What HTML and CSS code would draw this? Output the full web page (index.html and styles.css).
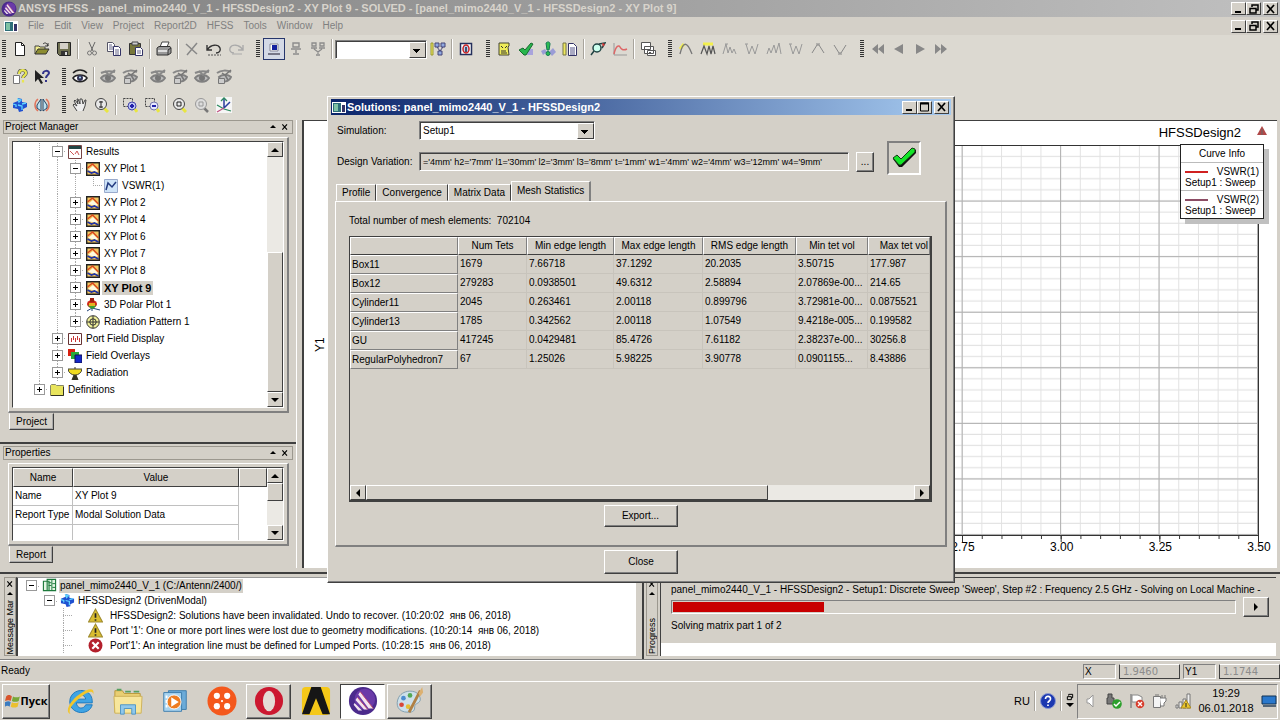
FILE: index.html
```html
<!DOCTYPE html>
<html lang="en">
<head>
    <meta charset="utf-8">
    <title>ANSYS HFSS</title>
    <link rel="stylesheet" href="styles.css">
</head>
<body>
    <svg class="sprite" aria-hidden="true">
        <symbol id="logo" viewBox="0 0 32 32"><circle cx="16" cy="16" r="15" fill="#4b2a8c"/><circle cx="18" cy="14" r="11" fill="#6a3aa8"/><path d="M13 6l14 18h-5L11 9zM10 12l11 13h-4L8 15zM7 18l8 8h-4l-5-6z" fill="#f3e4ee"/><path d="M13 6l14 18M10 12l11 13" stroke="#c24a6a" fill="none"/></symbol>
        <symbol id="app" viewBox="0 0 14 11"><path d="M0 0h14v11H0z" fill="#fff"/><path d="M1 1h8v9H1z" fill="#2d6e78"/><path d="M2 2h4v7H2z" fill="#7fc2a4"/><path d="M10 3h3v7h-3z" fill="#336"/></symbol>
        <symbol id="new" viewBox="0 0 16 16"><path d="M3.500 1.500h6l3 3v10h-9z" fill="#fff" stroke="#222"/><path d="M9.500 1.500v3h3" fill="none" stroke="#222"/></symbol>
        <symbol id="open" viewBox="0 0 16 16"><path d="M1 13V5h4l1 1h5v2" fill="#f2ee8c" stroke="#444"/><path d="M1 13l3-5h11l-3 5z" fill="#8c8c30" stroke="#333"/><path d="M9 3c2-2 4-1 5 2m0-3v3h-3" fill="none" stroke="#333"/></symbol>
        <symbol id="save" viewBox="0 0 16 16"><path d="M1.500 1.500h13v13h-11l-2-2z" fill="#6f7050" stroke="#222"/><path d="M4 2h8v6H4z" fill="#d4d0c8"/><path d="M5 10h7v4H5z" fill="#333"/><path d="M9 11h2v3H9z" fill="#ddd"/></symbol>
        <symbol id="cut" viewBox="0 0 16 16"><path d="M5 1l4 9M11 1L7 10" stroke="#666" fill="none"/><circle cx="5.500" cy="12" r="2" fill="none" stroke="#777"/><circle cx="10.500" cy="12" r="2" fill="none" stroke="#777"/></symbol>
        <symbol id="copy" viewBox="0 0 16 16"><path d="M1.500 1.500h5l2 2v7h-7z" fill="#fff" stroke="#556"/><path d="M7.500 5.500h5l2 2v7h-7z" fill="#fff" stroke="#336"/><path d="M3 4h3M3 6h4M3 8h4M9 9h4M9 11h4M9 13h4" stroke="#668"/></symbol>
        <symbol id="paste" viewBox="0 0 16 16"><path d="M1.500 2.500h11v11h-11z" fill="#77773a" stroke="#333"/><path d="M4 1h6v3H4z" fill="#ccc" stroke="#444"/><path d="M7.500 6.500h5l2 2v6h-7z" fill="#fff" stroke="#336"/><path d="M9 10h4M9 12h4" stroke="#668"/></symbol>
        <symbol id="print" viewBox="0 0 16 16"><path d="M4 6l2-5h7l-2 5" fill="#fff" stroke="#444"/><path d="M1 7l2-1.500h11l1 1.500v5l-3 2H1z" fill="#999" stroke="#333"/><path d="M2 9h10v2H2z" fill="#ddd"/><path d="M12 14V9l3-2" stroke="#333" fill="none"/></symbol>
        <symbol id="del" viewBox="0 0 16 16"><path d="M2 3l11 10M13 2L3 14" stroke="#888" stroke-width="1.500" fill="none"/></symbol>
        <symbol id="undo" viewBox="0 0 16 16"><path d="M1 4v5h5M1.500 8.500C5 3 12 3 14 7c1 3-1 5-4 5" fill="none" stroke="#333" stroke-width="1.400"/><path d="M2 14h13" stroke="#555" stroke-dasharray="2 1"/></symbol>
        <symbol id="redo" viewBox="0 0 16 16"><path d="M15 4v5h-5M14.500 8.500C11 3 4 3 2 7c-1 3 1 5 4 5" fill="none" stroke="#aaa" stroke-width="1.400"/><path d="M4 13h10" stroke="#aaa"/></symbol>
        <symbol id="local" viewBox="0 0 16 16"><path d="M4 3h8v7H4z" fill="#fff" stroke="#889"/><path d="M6 4h5v5H6z" fill="#1420a0"/><path d="M2 12h12v2H2z" fill="#778"/></symbol>
        <symbol id="remote" viewBox="0 0 16 16"><path d="M5 2h6v4H5zM3 8h10M8 9v3M5 13h6" fill="none" stroke="#8c8c8c" stroke-width="1.400"/></symbol>
        <symbol id="dist" viewBox="0 0 16 16"><path d="M2 2h4v3H2zM10 2h4v3h-4zM1 7h6M9 7h6M4 8l4 3 4-3M8 11v2M6 14h4" fill="none" stroke="#8c8c8c" stroke-width="1.300"/></symbol>
        <symbol id="tree" viewBox="0 0 16 16"><path d="M1 2h2v12H1z" fill="#eee860" stroke="#993"/><path d="M5 2h4v4H5zM11 2h4v4h-4zM8 10h4v4H8z" fill="#8fa8e0" stroke="#447"/><path d="M7 6l3 4 3-4" stroke="#447" fill="none"/></symbol>
        <symbol id="queue" viewBox="0 0 16 16"><path d="M2.500 2.500h11v11h-11z" fill="#fff" stroke="#25305c" stroke-width="1.500"/><ellipse cx="8" cy="8" rx="3" ry="4" fill="#b9d5f0" stroke="#c22" stroke-width="1.500"/><path d="M8 6v5" stroke="#224" stroke-width="1.500"/></symbol>
        <symbol id="note" viewBox="0 0 16 16"><path d="M3 2h10v3l-1 1 1 8H3z" fill="#eeec58" stroke="#443"/><path d="M5 5l2 2M11 5L9 7M5 10h5M5 12h6" stroke="#333" fill="none"/></symbol>
        <symbol id="valid" viewBox="0 0 16 16"><path d="M10 8h5v6h-6z" fill="#a9a4dc"/><path d="M1 9l4-2 2 2 6-7 2 1-7 11H6z" fill="#28b64c" stroke="#186a30"/></symbol>
        <symbol id="analyze" viewBox="0 0 16 16"><path d="M1 10l4-2 2 3-4 3zM9 11l4-4 3 4-4 4z" fill="#9a9cd6"/><path d="M6 2c2-2 4-1 4 1L9 9H7z" fill="#2cbc50" stroke="#175"/><circle cx="8" cy="12.500" r="2" fill="#2cbc50" stroke="#175"/></symbol>
        <symbol id="report" viewBox="0 0 16 16"><path d="M1 2h3v12H1z" fill="#eee860" stroke="#774"/><path d="M6.500 2.500h5l3 3v9h-8z" fill="#fff" stroke="#336"/><path d="M8 7h5M8 9h5M8 11h5M8 13h5" stroke="#558"/></symbol>
        <symbol id="mag" viewBox="0 0 16 16"><circle cx="7" cy="7" r="4" fill="#cfe" stroke="#244" stroke-width="1.500"/><path d="M4 10l-3 4M9 3l6-1-3 5" stroke="#244" stroke-width="1.500" fill="none"/><path d="M12 2l3 1-2 3z" fill="#d33"/></symbol>
        <symbol id="curve" viewBox="0 0 16 16"><path d="M2 2v12h13" stroke="#999" fill="none"/><path d="M2 13C4 4 7 4 8 6s3 4 7 2" stroke="#d66" stroke-width="1.500" fill="none"/></symbol>
        <symbol id="windows" viewBox="0 0 16 16"><path d="M1.500 1.500h9v7h-9zM4.500 5.500h9v7h-9zM7.500 9.500h8v5h-8z" fill="#fff" stroke="#555"/><path d="M8 13l2-2 2 2 2-2" stroke="#555" fill="none"/></symbol>
        <symbol id="w1" viewBox="0 0 16 16"><path d="M2 8l4-5" stroke="#f0ee50" stroke-width="3"/><path d="M2 13C5 0 9 0 14 13" stroke="#777" fill="none" stroke-width="1.300"/></symbol>
        <symbol id="w2" viewBox="0 0 16 16"><path d="M3 3h10" stroke="#f3f04c" stroke-width="3"/><path d="M1 13l3-8 3 8 2-8 2 8 2-8 2 8" stroke="#555" fill="none" stroke-width="1.200"/></symbol>
        <symbol id="w3" viewBox="0 0 16 16"><path d="M1 13L4 3l2 9 2-6 2 6 2-4 2 5M3 3h3" stroke="#999" fill="none"/></symbol>
        <symbol id="w4" viewBox="0 0 16 16"><path d="M2 3l3 10 3-8 3 8 3-10M1 3h3" stroke="#999" fill="none"/></symbol>
        <symbol id="w5" viewBox="0 0 16 16"><path d="M1 13l2-6 2 5 3-8 2 8 3-10 2 11" stroke="#999" fill="none"/></symbol>
        <symbol id="w6" viewBox="0 0 16 16"><path d="M2 12l5-8h2l5 8M6 3h4" stroke="#888" fill="none"/></symbol>
        <symbol id="w7" viewBox="0 0 16 16"><path d="M2 4l5 8h2l5-8M6 13h4" stroke="#888" fill="none"/></symbol>
        <symbol id="first" viewBox="0 0 16 16"><path d="M8 3v10L2 8zM14 3v10L8 8z" fill="#888"/></symbol>
        <symbol id="prev" viewBox="0 0 16 16"><path d="M12 3v10L3 8z" fill="#888"/></symbol>
        <symbol id="next" viewBox="0 0 16 16"><path d="M4 3v10l9-5z" fill="#888"/></symbol>
        <symbol id="last" viewBox="0 0 16 16"><path d="M2 3v10l6-5zM8 3v10l6-5z" fill="#888"/></symbol>
        <symbol id="helpdoc" viewBox="0 0 16 16"><path d="M1.500 6.500h6v8h-6z" fill="#fff" stroke="#777"/><path d="M7 5c0-5 7-5 7-1 0 3-3 2-3 5" fill="none" stroke="#555" stroke-width="3.500"/><path d="M7 5c0-5 7-5 7-1 0 3-3 2-3 5M11 11v2.500" fill="none" stroke="#e8e650" stroke-width="2.200"/></symbol>
        <symbol id="whats" viewBox="0 0 16 16"><path d="M1 1v12l3-3 3 5 2-1-3-5h4z" fill="#222"/><path d="M9 5c0-4 6-4 6-1 0 2-3 2-3 5M12 11v2" fill="none" stroke="#33338a" stroke-width="2"/></symbol>
        <symbol id="eye" viewBox="0 0 16 16"><path d="M1 4c4-4 10-4 14 0" fill="none" stroke="#222" stroke-width="1.500"/><path d="M1 9c3-4 11-4 14 0-3 5-11 5-14 0z" fill="#fff" stroke="#222" stroke-width="1.500"/><circle cx="8" cy="9" r="3" fill="#335"/><circle cx="8" cy="8.500" r="1" fill="#adf"/></symbol>
        <symbol id="eyeoff" viewBox="0 0 16 16"><path d="M1 4c4-2 10-2 14-1" fill="none" stroke="#888" stroke-width="2"/><path d="M1 9c3-4 11-4 14 0-3 5-11 5-14 0z" fill="#bbb" stroke="#808080" stroke-width="2"/><circle cx="8" cy="9" r="3" fill="#777"/><path d="M5 2l4 4 6-5" stroke="#888" stroke-width="2" fill="none"/></symbol>
        <symbol id="eyebox" viewBox="0 0 16 16"><path d="M1 4c4-3 10-3 14-1" fill="none" stroke="#888" stroke-width="2"/><path d="M3 8c3-3 9-3 12 0-2 5-8 6-11 2z" fill="#bbb" stroke="#808080" stroke-width="2"/><path d="M2.500 9.500h6v5h-6z" fill="#ccc" stroke="#777"/><path d="M9 6l3 5M6 4l3 2 6-5" stroke="#777" stroke-width="1.500" fill="none"/></symbol>
        <symbol id="hfss" viewBox="0 0 16 16"><path d="M6 1l4 1v3l5 1v4l-4 2v2l-4 1-1-3-5-1V6l5-2z" fill="#1f50d0"/><path d="M6 2l3 1-2 2zM10 7l4-1M1 7l3 1v2M6 8l4 1v4" stroke="#5fd4ff" stroke-width="1.300" fill="none"/></symbol>
        <symbol id="mirror" viewBox="0 0 16 16"><path d="M4 2C0 5 0 11 4 14M12 2c4 3 4 9 0 12" stroke="#e0745c" stroke-width="1.500" fill="none"/><path d="M7 2v12L3 11V8zM9 2v12l4-3V8z" fill="#bfe0ee" stroke="#246"/></symbol>
        <symbol id="hand" viewBox="0 0 16 16"><path d="M5 14L1 8l1-1 3 2-3-5 1-1 3 4-1-5h1l2 5V2h2l1 5 2-4h1l-1 6-2 5" fill="#eee" stroke="#444"/></symbol>
        <symbol id="zoomv" viewBox="0 0 16 16"><path d="M10 11l4 4" stroke="#e8e640" stroke-width="3"/><circle cx="7" cy="7" r="5.500" fill="#e8e8e8" stroke="#444"/><path d="M7 4v7M5 5h4M5 10h4" stroke="#222" fill="none"/></symbol>
        <symbol id="zoomin" viewBox="0 0 16 16"><path d="M1.500 1.500h9v8h-9z" fill="none" stroke="#444" stroke-dasharray="2 1"/><circle cx="10" cy="9" r="4" fill="#bcc6f4" stroke="#44a"/><path d="M8 9h4M10 7v4" stroke="#22a" stroke-width="2"/><path d="M13 12l2 3" stroke="#e8e640" stroke-width="3"/></symbol>
        <symbol id="zoomout" viewBox="0 0 16 16"><path d="M1.500 1.500h9v8h-9z" fill="none" stroke="#444" stroke-dasharray="2 1"/><circle cx="10" cy="9" r="4" fill="#e6e8fc" stroke="#77a"/><path d="M8 9h4" stroke="#22a" stroke-width="2"/><path d="M13 12l2 3" stroke="#e8e640" stroke-width="3"/></symbol>
        <symbol id="fit" viewBox="0 0 16 16"><path d="M10 11l4 4" stroke="#e8e640" stroke-width="3"/><circle cx="7" cy="7" r="5.500" fill="#e8e8e8" stroke="#444"/><path d="M5 5h4v4H5z" fill="none" stroke="#222"/></symbol>
        <symbol id="fitoff" viewBox="0 0 16 16"><path d="M10 11l4 4" stroke="#777" stroke-width="2.500"/><circle cx="7" cy="7" r="5.500" fill="#ddd" stroke="#999"/><path d="M5 5h4v4H5z" fill="none" stroke="#999"/></symbol>
        <symbol id="axes" viewBox="0 0 16 16"><path d="M0 0h16v16H0z" fill="#f6f6f6"/><path d="M8 2v9M8 11l6-6" stroke="#2a3f9c" stroke-width="1.500" fill="none"/><path d="M5 4l3-3 3 3M1 8l7 4 7 2" stroke="#2a8a5c" fill="none" stroke-width="1.300"/><path d="M8 11l-7 4" stroke="#c05080" stroke-width="1.300"/></symbol>
        <symbol id="results" viewBox="0 0 14 14"><path d="M.5.500h13v13H.5z" fill="#fff" stroke="#744"/><path d="M1 1h12v3H1z" fill="#244"/><path d="M2 6l4 4M7 9l2-3 2 4" stroke="#c55" fill="none"/></symbol>
        <symbol id="xy" viewBox="0 0 14 14"><path d="M.7.700h12.600v12.600H.7z" fill="#f4c860" stroke="#222" stroke-width="1.400"/><path d="M2 8l5-4 5 5-2 1-4-1z" fill="#fffbe0"/><path d="M1.500 6l5-4 6 6" stroke="#d84820" stroke-width="1.400" fill="none"/><path d="M1.500 9l4 2 3-1 4 2" stroke="#2233a0" stroke-width="1.700" fill="none"/></symbol>
        <symbol id="trace" viewBox="0 0 14 14"><path d="M.5.500h13v13H.5z" fill="#cfe4f8" stroke="#9ac"/><path d="M2 11l2-7 4 4 4-5" stroke="#223a80" stroke-width="1.500" fill="none"/></symbol>
        <symbol id="polar" viewBox="0 0 14 14"><path d="M6 8v5M1 13l5-3 8 2" stroke="#247" fill="none"/><ellipse cx="6" cy="6" rx="5" ry="4" fill="#d02818"/><path d="M2 7c3 5 6 5 8 0z" fill="#38a030"/><path d="M3 5h6v3H3z" fill="#e8b020"/><path d="M4 0h4v4H4z" fill="#a02010"/></symbol>
        <symbol id="pattern" viewBox="0 0 14 14"><circle cx="7" cy="7" r="6.300" fill="#f0f09a" stroke="#333"/><circle cx="7" cy="7" r="3.200" fill="none" stroke="#333"/><path d="M7 1v12M1 7h12" stroke="#333" fill="none"/></symbol>
        <symbol id="port" viewBox="0 0 14 14"><path d="M.5 1.500h13v11H.5z" fill="#fff" stroke="#633"/><path d="M3.500 10V6M5.500 8V4M7.500 10V6M9.500 8V4M11.500 10V6" stroke="#c33" fill="none"/></symbol>
        <symbol id="overlay" viewBox="0 0 14 14"><path d="M0 0h7v7H0z" fill="#d82010"/><path d="M3 3h8v7H3z" fill="#28a838"/><path d="M7 6h7v8H7z" fill="#1428c8" stroke="#115"/></symbol>
        <symbol id="antenna" viewBox="0 0 14 14"><path d="M7 4V1M4 14l2-5h2l2 5z" fill="#332" stroke="#332"/><path d="M0 3c1 8 13 8 14 0z" fill="#f0dc20" stroke="#443"/></symbol>
        <symbol id="folder" viewBox="0 0 14 14"><path d="M.5 12.500v-10l1-1h4l1 1h7v10z" fill="#e8e45c" stroke="#886"/><path d="M1 12.500h12.500V4" fill="none" stroke="#332"/></symbol>
        <symbol id="project" viewBox="0 0 16 16"><path d="M1.500 3.500h6v10h-6zM5.500 1.500h9v12h-9z" fill="#e4f6e4" stroke="#1d7a3c" stroke-width="1.200"/><path d="M7 5h3M11 6h3M7 8h3M11 10h3M10.500 2v11" stroke="#1d7a3c" fill="none"/></symbol>
        <symbol id="warn" viewBox="0 0 14 14"><path d="M7 1l6.500 12H.5z" fill="#d9bd30" stroke="#a08c30"/><path d="M7 5v4M7 10.500V12" stroke="#222" stroke-width="1.600"/></symbol>
        <symbol id="error" viewBox="0 0 14 14"><circle cx="7" cy="7" r="6.500" fill="#b3202c"/><path d="M4 4l6 6M10 4l-6 6" stroke="#fff" stroke-width="2"/></symbol>
        <symbol id="check" viewBox="0 0 26 22"><path d="M2 12l4-3 4 4L21 2l4 1v3L11 20H8z" fill="#111"/><path d="M2 11l4-3 4 4L21 1l3 1v3L10 18H8z" fill="#14e428" stroke="#143c14"/></symbol>
        <symbol id="flag" viewBox="0 0 14 14"><path d="M1 3c2-2 4-1 5 0L5 7C4 6 2 6 0 7z" fill="#d8542c"/><path d="M7 3c2 1 4 1 6 0l-1 4c-2 1-4 1-6 0z" fill="#78a838"/><path d="M0 8c2-1 4-1 5 0l-1 4c-1-1-3-1-4 0z" fill="#3c7cc0"/><path d="M6 8c2 1 4 1 6 0l-1 4c-2 1-4 1-6 0z" fill="#ecc030"/></symbol>
        <symbol id="ie" viewBox="0 0 32 32"><path d="M28 20C25 32 5 31 4 17 4 1 29 0 28 18H11c1 7 8 7 10 2zM11 14h10c-1-6-9-6-10 0z" fill="#3fa4e4" stroke="#1c78be" fill-rule="evenodd"/><path d="M5 30c-7-2-1-14 9-21C24 2 31 1 29 9c0-4-4-4-11 1C8 17 1 26 5 30z" fill="#f2c62c"/></symbol>
        <symbol id="files" viewBox="0 0 32 32"><path d="M2 5h8l2 3h17v20H2z" fill="#e9cf73" stroke="#b99838"/><path d="M4 4h5M13 6h6M22 6h6" stroke="#58a060" stroke-width="2"/><path d="M1 11h30l-1 18H2z" fill="#f7e69c" stroke="#cdb058"/><path d="M8 30V20h16v10h-4v-6h-8v6z" fill="#8fc8ec" stroke="#4e94c4"/></symbol>
        <symbol id="media" viewBox="0 0 32 32"><path d="M9 5h19v20H9z" fill="#6cabd8" stroke="#3c7cac"/><path d="M4 7h19v20H4z" fill="#a8d4f0" stroke="#3c7cac"/><path d="M6 10h2v3H6zM6 15h2v3H6zM6 20h2v3H6z" fill="#fff"/><circle cx="15" cy="17" r="7.500" fill="#ee7c20" stroke="#fff"/><path d="M12 12l8 5-8 5z" fill="#fff"/></symbol>
        <symbol id="reel" viewBox="0 0 32 32"><circle cx="16" cy="16" r="15.500" fill="#f4581c"/><g fill="#fff"><circle cx="10.500" cy="10.500" r="3.300"/><circle cx="21.500" cy="10.500" r="3.300"/><circle cx="10.500" cy="21.500" r="3.300"/><circle cx="21.500" cy="21.500" r="3.300"/><circle cx="16" cy="16" r="1.200"/></g></symbol>
        <symbol id="opera" viewBox="0 0 32 32"><ellipse cx="16" cy="16" rx="15" ry="15" fill="#cc1830"/><ellipse cx="16" cy="16" rx="6.500" ry="11" fill="#e4dcd6"/></symbol>
        <symbol id="ansys" viewBox="0 0 32 32"><rect x="1" y="1" width="30" height="30" rx="4" fill="#f5c818"/><path d="M11 1h10l10 29h-8L16 13 9 30H1z" fill="#161616"/></symbol>
        <symbol id="paint" viewBox="0 0 32 32"><path d="M4 12c5-9 22-9 23 2 0 5-6 4-6 8s-1 6-7 6C3 28 0 20 4 12z" fill="#cde0ea" stroke="#7f9cac"/><circle cx="9" cy="13" r="2.500" fill="#4c8cd0"/><circle cx="16" cy="10" r="2.500" fill="#54a854"/><circle cx="7" cy="20" r="2.500" fill="#d84838"/><circle cx="14" cy="22" r="2.500" fill="#e4c034"/><path d="M15 28L27 5" stroke="#b08044" stroke-width="3"/><path d="M25 8l4-7 1 6-3 4z" fill="#dcb070"/></symbol>
        <symbol id="helpball" viewBox="0 0 16 16"><circle cx="8" cy="8" r="7.500" fill="#1c38b0" stroke="#8a98d0"/><path d="M5.500 6c0-4 5.500-3 5 0 0 2-2.500 2-2.500 4M8 11.500v1.500" stroke="#fff" stroke-width="1.700" fill="none"/></symbol>
        <symbol id="sound" viewBox="0 0 16 16"><path d="M4 6h2l4-4v12l-4-4H4z" fill="#fff" stroke="#999"/></symbol>
        <symbol id="usb" viewBox="0 0 16 16"><path d="M2 1h4v4h2v6H1V5h1z" fill="#777" stroke="#444"/><circle cx="11" cy="11" r="4.800" fill="#2ca02c"/><path d="M8 11l2 2 4-4" stroke="#fff" stroke-width="1.500" fill="none"/></symbol>
        <symbol id="action" viewBox="0 0 16 16"><path d="M2 15V1" stroke="#888" stroke-width="1.500"/><path d="M3 2h6l4 2v5H3z" fill="#fff" stroke="#888"/><circle cx="11" cy="11" r="4.300" fill="#d83c2c"/><path d="M9 9l4 4M13 9l-4 4" stroke="#fff" stroke-width="1.400"/></symbol>
        <symbol id="power" viewBox="0 0 16 16"><path d="M1.500 3.500h7v11h-7z" fill="#f4f4f4" stroke="#777"/><path d="M3 2h4" stroke="#777"/><path d="M8 5h6v3l-2 2v3H9" fill="#fff" stroke="#777"/><path d="M10 5V2M13 5V2" stroke="#777"/></symbol>
        <symbol id="net" viewBox="0 0 16 16"><path d="M1 12h2v3H1zM4 9h3v6H4zM8 6h3v9H8zM12 1h3v14h-3z" fill="#eee" stroke="#777"/><path d="M11 7l5 8H6z" fill="#ecc82c" stroke="#a88820"/><path d="M11 10v4" stroke="#222"/></symbol>
        <symbol id="monitor" viewBox="0 0 16 16"><path d="M1 3h14v8H1z" fill="#2a78cc" stroke="#135"/><path d="M2 12h13v2H2z" fill="#567"/></symbol>
        <symbol id="min" viewBox="0 0 12 10"><path d="M2 7h6v2H2z" fill="#000"/></symbol>
        <symbol id="max" viewBox="0 0 12 10"><path d="M1.500 1h8v8h-8z" fill="none" stroke="#000"/><path d="M1 1.500h9" stroke="#000" stroke-width="2"/></symbol>
        <symbol id="rest" viewBox="0 0 12 10"><path d="M4 3V1h6v5H8M2 4.500h6V9H2z" fill="none" stroke="#000" stroke-width="1.500"/></symbol>
        <symbol id="x" viewBox="0 0 12 10"><path d="M2 1l7 8M9 1L2 9" stroke="#000" stroke-width="1.700" fill="none"/></symbol>
        <symbol id="pin" viewBox="0 0 8 8"><path d="M1 5l3-3 3 3z"/></symbol>
        <symbol id="up" viewBox="0 0 8 8"><path d="M0 6l4-4 4 4z"/></symbol>
        <symbol id="down" viewBox="0 0 8 8"><path d="M0 2h8L4 6z"/></symbol>
        <symbol id="left" viewBox="0 0 8 8"><path d="M6 0v8L2 4z"/></symbol>
        <symbol id="right" viewBox="0 0 8 8"><path d="M2 0v8l4-4z"/></symbol>
    </svg>

    <header class="titlebar">
        <svg class="i16"><use href="#logo"/></svg>
        <h1>ANSYS HFSS - panel_mimo2440_V_1 - HFSSDesign2 - XY Plot 9 - SOLVED - [panel_mimo2440_V_1 - HFSSDesign2 - XY Plot 9]</h1>
        <div class="winbtns">
            <button aria-label="Minimize"><svg><use href="#min"/></svg></button>
            <button aria-label="Restore"><svg><use href="#rest"/></svg></button>
            <button aria-label="Close"><svg><use href="#x"/></svg></button>
        </div>
    </header>

    <nav class="menubar">
        <svg class="appicon"><use href="#app"/></svg>
        <button>File</button><button>Edit</button><button>View</button><button>Project</button><button>Report2D</button><button>HFSS</button><button>Tools</button><button>Window</button><button>Help</button>
        <div class="winbtns">
            <button aria-label="Minimize"><svg><use href="#min"/></svg></button>
            <button aria-label="Restore"><svg><use href="#rest"/></svg></button>
            <button aria-label="Close"><svg><use href="#x"/></svg></button>
        </div>
    </nav>

    <div class="toolbars">
        <div class="toolrow">
            <div class="toolbar">
                <button aria-label="New"><svg><use href="#new"/></svg></button>
                <button aria-label="Open"><svg><use href="#open"/></svg></button>
                <button aria-label="Save"><svg><use href="#save"/></svg></button>
                <i class="sep"></i>
                <button aria-label="Cut"><svg><use href="#cut"/></svg></button>
                <button aria-label="Copy"><svg><use href="#copy"/></svg></button>
                <button aria-label="Paste"><svg><use href="#paste"/></svg></button>
                <i class="sep"></i>
                <button aria-label="Print"><svg><use href="#print"/></svg></button>
                <i class="sep"></i>
                <button aria-label="Delete"><svg><use href="#del"/></svg></button>
                <button aria-label="Undo"><svg><use href="#undo"/></svg></button>
                <button aria-label="Redo"><svg><use href="#redo"/></svg></button>
            </div>
            <div class="toolbar">
                <button class="pressed" aria-label="Local machine"><svg><use href="#local"/></svg></button>
                <button aria-label="Remote machine"><svg><use href="#remote"/></svg></button>
                <button aria-label="Distributed"><svg><use href="#dist"/></svg></button>
                <i class="sep"></i>
                <div class="combo combo-tool"><select aria-label="Machine"><option></option></select></div>
                <button aria-label="Distribution"><svg><use href="#tree"/></svg></button>
                <i class="sep"></i>
                <button aria-label="Queue"><svg><use href="#queue"/></svg></button>
            </div>
            <div class="toolbar">
                <button aria-label="Notes"><svg><use href="#note"/></svg></button>
                <button aria-label="Validate"><svg><use href="#valid"/></svg></button>
                <button aria-label="Analyze"><svg><use href="#analyze"/></svg></button>
                <button aria-label="Solution data"><svg><use href="#report"/></svg></button>
                <i class="sep"></i>
                <button aria-label="Inspect"><svg><use href="#mag"/></svg></button>
                <button aria-label="Curve"><svg><use href="#curve"/></svg></button>
                <i class="sep"></i>
                <button aria-label="Windows"><svg><use href="#windows"/></svg></button>
            </div>
            <div class="toolbar">
                <button aria-label="Marker"><svg><use href="#w1"/></svg></button>
                <button aria-label="Markers"><svg><use href="#w2"/></svg></button>
                <button aria-label="Maximum"><svg><use href="#w3"/></svg></button>
                <button aria-label="Minimum"><svg><use href="#w4"/></svg></button>
                <button aria-label="Next maximum"><svg><use href="#w5"/></svg></button>
                <button aria-label="Next minimum"><svg><use href="#w4"/></svg></button>
                <button aria-label="Peak"><svg><use href="#w6"/></svg></button>
                <button aria-label="Valley"><svg><use href="#w7"/></svg></button>
            </div>
            <div class="toolbar tight">
                <button aria-label="First"><svg><use href="#first"/></svg></button>
                <button aria-label="Previous"><svg><use href="#prev"/></svg></button>
                <button aria-label="Next"><svg><use href="#next"/></svg></button>
                <button aria-label="Last"><svg><use href="#last"/></svg></button>
            </div>
        </div>
        <div class="toolrow">
            <div class="toolbar">
                <button aria-label="Help topics"><svg><use href="#helpdoc"/></svg></button>
                <button aria-label="Context help"><svg><use href="#whats"/></svg></button>
            </div>
            <div class="toolbar">
                <button aria-label="Visibility"><svg><use href="#eye"/></svg></button>
                <i class="sep"></i>
                <button aria-label="Hide"><svg><use href="#eyeoff"/></svg></button>
                <button aria-label="Hide in view"><svg><use href="#eyebox"/></svg></button>
                <i class="sep"></i>
                <button aria-label="Show"><svg><use href="#eyeoff"/></svg></button>
                <button aria-label="Show in view"><svg><use href="#eyebox"/></svg></button>
                <button aria-label="Show all"><svg><use href="#eyeoff"/></svg></button>
                <button aria-label="Show all in view"><svg><use href="#eyebox"/></svg></button>
            </div>
        </div>
        <div class="toolrow">
            <div class="toolbar">
                <button aria-label="HFSS design"><svg><use href="#hfss"/></svg></button>
                <button aria-label="HFSS-IE design"><svg><use href="#mirror"/></svg></button>
            </div>
            <div class="toolbar">
                <button aria-label="Pan"><svg><use href="#hand"/></svg></button>
                <button aria-label="Zoom"><svg><use href="#zoomv"/></svg></button>
                <i class="sep"></i>
                <button aria-label="Zoom in"><svg><use href="#zoomin"/></svg></button>
                <button aria-label="Zoom out"><svg><use href="#zoomout"/></svg></button>
                <i class="sep"></i>
                <button aria-label="Fit all"><svg><use href="#fit"/></svg></button>
                <button aria-label="Fit selection"><svg><use href="#fitoff"/></svg></button>
                <button aria-label="Axes"><svg><use href="#axes"/></svg></button>
            </div>
        </div>
    </div>

    <main class="workspace">
        <aside class="sidebar">
            <section class="dock dock-project">
                <div class="dock-head"><h2>Project Manager</h2><svg class="i8"><use href="#pin"/></svg><svg class="i8"><use href="#x"/></svg></div>
                <div class="frame">
                    <div class="well">
                        <ul class="tree">
                            <li><i class="guide"></i><i class="exp minus"></i><svg><use href="#results"/></svg><span>Results</span></li>
                            <li><i class="guide"></i><i class="guide"></i><i class="exp minus"></i><svg><use href="#xy"/></svg><span>XY Plot 1</span></li>
                            <li><i class="guide"></i><i class="guide"></i><i class="guide"></i><i class="elbow"></i><svg><use href="#trace"/></svg><span>VSWR(1)</span></li>
                            <li><i class="guide"></i><i class="guide"></i><i class="exp"></i><svg><use href="#xy"/></svg><span>XY Plot 2</span></li>
                            <li><i class="guide"></i><i class="guide"></i><i class="exp"></i><svg><use href="#xy"/></svg><span>XY Plot 4</span></li>
                            <li><i class="guide"></i><i class="guide"></i><i class="exp"></i><svg><use href="#xy"/></svg><span>XY Plot 6</span></li>
                            <li><i class="guide"></i><i class="guide"></i><i class="exp"></i><svg><use href="#xy"/></svg><span>XY Plot 7</span></li>
                            <li><i class="guide"></i><i class="guide"></i><i class="exp"></i><svg><use href="#xy"/></svg><span>XY Plot 8</span></li>
                            <li><i class="guide"></i><i class="guide"></i><i class="exp"></i><svg><use href="#xy"/></svg><span class="selected">XY Plot 9</span></li>
                            <li><i class="guide"></i><i class="guide"></i><i class="exp"></i><svg><use href="#polar"/></svg><span>3D Polar Plot 1</span></li>
                            <li><i class="guide"></i><i class="guide"></i><i class="exp"></i><svg><use href="#pattern"/></svg><span>Radiation Pattern 1</span></li>
                            <li><i class="guide"></i><i class="exp"></i><svg><use href="#port"/></svg><span>Port Field Display</span></li>
                            <li><i class="guide"></i><i class="exp"></i><svg><use href="#overlay"/></svg><span>Field Overlays</span></li>
                            <li><i class="guide"></i><i class="exp"></i><svg><use href="#antenna"/></svg><span>Radiation</span></li>
                            <li><i class="exp"></i><svg><use href="#folder"/></svg><span>Definitions</span></li>
                        </ul>
                        <div class="vscroll">
                            <button aria-label="Scroll up"><svg><use href="#up"/></svg></button>
                            <i class="track"></i><i class="thumb"></i>
                            <button aria-label="Scroll down"><svg><use href="#down"/></svg></button>
                        </div>
                    </div>
                </div>
                <button class="foot-tab">Project</button>
            </section>
            <section class="dock dock-props">
                <div class="dock-head"><h2>Properties</h2><svg class="i8"><use href="#pin"/></svg><svg class="i8"><use href="#x"/></svg></div>
                <div class="frame">
                    <div class="well">
                        <div class="props-wrap">
                            <table class="props">
                                <colgroup><col class="p-name"><col class="p-value"><col></colgroup>
                                <thead><tr><th>Name</th><th>Value</th><th></th></tr></thead>
                                <tbody>
                                    <tr><td>Name</td><td>XY Plot 9</td><td></td></tr>
                                    <tr><td>Report Type</td><td>Modal Solution Data</td><td></td></tr>
                                    <tr><td></td><td></td><td></td></tr>
                                </tbody>
                            </table>
                        </div>
                        <div class="vscroll">
                            <button aria-label="Scroll up"><svg><use href="#up"/></svg></button>
                            <i class="thumb small"></i><i class="track"></i>
                            <button aria-label="Scroll down"><svg><use href="#down"/></svg></button>
                        </div>
                    </div>
                </div>
                <button class="foot-tab">Report</button>
            </section>
        </aside>

        <section class="plot">
            <div class="ylabel">Y1</div>
            <div class="plot-body">
                <div class="plot-head"><span>HFSSDesign2</span><svg viewBox="0 0 10 10"><path d="M5 0l5 9H0z" fill="#b04848"/><path d="M5 3v6" stroke="#666"/></svg></div>
                <div class="canvas">
                    <svg viewBox="0 0 900 350" preserveAspectRatio="none">
                        <defs>
                            <pattern id="minor" width="20" height="10" patternUnits="userSpaceOnUse"><path d="M20 0v10M0 10h20" stroke="#e2e2e2" stroke-width="2"/></pattern>
                            <pattern id="major" width="100" height="50" patternUnits="userSpaceOnUse"><path d="M100 0v50M0 50h100" stroke="#b0b0b0" stroke-width="2"/></pattern>
                        </defs>
                        <rect width="900" height="350" fill="url(#minor)"/>
                        <rect width="900" height="350" fill="url(#major)"/>
                    </svg>
                    <div class="legend">
                        <h3>Curve Info</h3>
                        <div class="curve"><p><i class="line red"></i>VSWR(1)</p><p>Setup1 : Sweep</p></div>
                        <div class="curve"><p><i class="line plum"></i>VSWR(2)</p><p>Setup1 : Sweep</p></div>
                    </div>
                </div>
                <svg class="ticks" viewBox="0 0 900 6" preserveAspectRatio="none"><defs><pattern id="tick" width="20" height="6" patternUnits="userSpaceOnUse"><path d="M20 0v3" stroke="#333" stroke-width="2"/></pattern><pattern id="tickl" width="100" height="6" patternUnits="userSpaceOnUse"><path d="M100 0v6" stroke="#333" stroke-width="2"/></pattern></defs><rect width="900" height="6" fill="url(#tick)"/><rect width="900" height="6" fill="url(#tickl)"/></svg>
                <div class="xaxis"><span>2.75</span><span>3.00</span><span>3.25</span><span>3.50</span></div>
            </div>
        </section>
    </main>

    <div class="lower">
        <section class="messages">
            <div class="vhead"><svg class="i8"><use href="#x"/></svg><svg class="i8"><use href="#pin"/></svg><h2>Message Mar</h2></div>
            <ul class="msgs">
                <li><i class="exp minus"></i><svg><use href="#project"/></svg><span class="selected">panel_mimo2440_V_1 (C:/Antenn/2400/)</span></li>
                <li class="l1"><i class="exp minus"></i><svg><use href="#hfss"/></svg><span>HFSSDesign2 (DrivenModal)</span></li>
                <li class="l2"><i class="branch"></i><svg><use href="#warn"/></svg><span>HFSSDesign2: Solutions have been invalidated. Undo to recover. (10:20:02&nbsp; янв 06, 2018)</span></li>
                <li class="l2"><i class="branch"></i><svg><use href="#warn"/></svg><span>Port '1': One or more port lines were lost due to geometry modifications. (10:20:14&nbsp; янв 06, 2018)</span></li>
                <li class="l2"><i class="branch"></i><svg><use href="#error"/></svg><span>Port'1': An integration line must be defined for Lumped Ports. (10:28:15&nbsp; янв 06, 2018)</span></li>
            </ul>
        </section>
        <section class="progress">
            <div class="vhead"><svg class="i8"><use href="#x"/></svg><svg class="i8"><use href="#pin"/></svg><h2>Progress</h2></div>
            <div class="prog-body">
                <div class="prog-main">
                    <p>panel_mimo2440_V_1 - HFSSDesign2 - Setup1: Discrete Sweep 'Sweep', Step #2 : Frequency 2.5 GHz - Solving on Local Machine -</p>
                    <div class="prog-row">
                        <div class="bar"><i style="width: 27%"></i></div>
                        <button class="btn" aria-label="Options"><svg class="i8"><use href="#right"/></svg></button>
                    </div>
                    <p>Solving matrix part 1 of 2</p>
                </div>
            </div>
        </section>
    </div>

    <div class="status">
        <span class="ready">Ready</span>
        <label for="xpos">X</label><input id="xpos" value="1.9460" readonly>
        <label for="ypos">Y1</label><input id="ypos" value="1.1744" readonly>
    </div>

    <footer class="taskbar">
        <button class="btn start"><svg class="i16"><use href="#flag"/></svg>Пуск</button>
        <div class="tasks">
            <button aria-label="Internet Explorer"><svg><use href="#ie"/></svg></button>
            <button aria-label="Explorer"><svg><use href="#files"/></svg></button>
            <button aria-label="Media Player"><svg><use href="#media"/></svg></button>
            <button aria-label="Video"><svg><use href="#reel"/></svg></button>
            <button class="btn" aria-label="Opera"><svg><use href="#opera"/></svg></button>
            <button aria-label="ANSYS"><svg><use href="#ansys"/></svg></button>
            <button class="btn active" aria-label="HFSS"><svg><use href="#logo"/></svg></button>
            <button class="btn" aria-label="Paint"><svg><use href="#paint"/></svg></button>
        </div>
        <div class="lang"><span>RU</span><i class="sep"></i><svg class="i16"><use href="#helpball"/></svg><i class="sep"></i><div class="langctl"><svg><use href="#rest"/></svg><svg><use href="#down"/></svg></div></div>
        <div class="tray">
            <svg><use href="#sound"/></svg><svg><use href="#usb"/></svg><svg><use href="#action"/></svg><svg><use href="#power"/></svg><svg><use href="#net"/></svg>
            <div class="clock"><time>19:29</time><time>06.01.2018</time></div>
            <svg><use href="#monitor"/></svg>
        </div>
    </footer>

    <div class="dialog" role="dialog" aria-labelledby="dlgTitle">
        <div class="dlg-title">
            <svg class="appicon"><use href="#app"/></svg>
            <h2 id="dlgTitle">Solutions: panel_mimo2440_V_1 - HFSSDesign2</h2>
            <div class="winbtns">
                <button aria-label="Minimize"><svg><use href="#min"/></svg></button>
                <button aria-label="Maximize"><svg><use href="#max"/></svg></button>
                <button aria-label="Close"><svg><use href="#x"/></svg></button>
            </div>
        </div>
        <div class="dlg-form">
            <div class="fields">
                <label for="sim">Simulation:</label>
                <div class="combo combo-sim"><select id="sim"><option>Setup1</option></select></div>
                <label for="variation">Design Variation:</label>
                <div class="variation">
                    <input id="variation" readonly value="='4mm' h2='7mm' l1='30mm' l2='3mm' l3='8mm' t='1mm' w1='4mm' w2='4mm' w3='12mm' w4='9mm'">
                    <button class="btn">...</button>
                </div>
            </div>
            <button class="checkbtn" aria-label="Solved"><svg><use href="#check"/></svg></button>
        </div>
        <div class="tabs" role="tablist">
            <button role="tab">Profile</button><button role="tab">Convergence</button><button role="tab">Matrix Data</button><button role="tab" class="current" aria-selected="true">Mesh Statistics</button>
        </div>
        <div class="panel">
            <p>Total number of mesh elements:&nbsp; 702104</p>
            <div class="grid">
                <table class="mesh">
                    <colgroup><col class="c0"><col class="c1"><col class="c2"><col class="c3"><col class="c4"><col class="c5"><col></colgroup>
                    <thead><tr><th></th><th>Num Tets</th><th>Min edge length</th><th>Max edge length</th><th>RMS edge length</th><th>Min tet vol</th><th>Max tet vol</th></tr></thead>
                    <tbody>
                        <tr><th>Box11</th><td>1679</td><td>7.66718</td><td>37.1292</td><td>20.2035</td><td>3.50715</td><td>177.987</td></tr>
                        <tr><th>Box12</th><td>279283</td><td>0.0938501</td><td>49.6312</td><td>2.58894</td><td>2.07869e-00...</td><td>214.65</td></tr>
                        <tr><th>Cylinder11</th><td>2045</td><td>0.263461</td><td>2.00118</td><td>0.899796</td><td>3.72981e-00...</td><td>0.0875521</td></tr>
                        <tr><th>Cylinder13</th><td>1785</td><td>0.342562</td><td>2.00118</td><td>1.07549</td><td>9.4218e-005...</td><td>0.199582</td></tr>
                        <tr><th>GU</th><td>417245</td><td>0.0429481</td><td>85.4726</td><td>7.61182</td><td>2.38237e-00...</td><td>30256.8</td></tr>
                        <tr><th>RegularPolyhedron7</th><td>67</td><td>1.25026</td><td>5.98225</td><td>3.90778</td><td>0.0901155...</td><td>8.43886</td></tr>
                    </tbody>
                </table>
                <div class="hscroll">
                    <button aria-label="Scroll left"><svg><use href="#left"/></svg></button>
                    <i class="thumb"></i><i class="track"></i>
                    <button aria-label="Scroll right"><svg><use href="#right"/></svg></button>
                </div>
            </div>
            <button class="btn push">Export...</button>
        </div>
        <button class="btn push close">Close</button>
    </div>
</body>
</html>
```
FILE: styles.css
```css
:root {
    --face: #d4d0c8;
    --band: #dcd9d1;
    --shade: #808080;
    --dark: #404040;
    --light: #ffffff;
    --ui: "Liberation Sans", Arial, sans-serif;
}

* {
    box-sizing: border-box;
}

body {
    margin: 0;
    min-height: 100vh;
    display: flex;
    flex-direction: column;
    position: relative;
    background: var(--face);
    color: #000;
    font: 10px/14px var(--ui);
    overflow: hidden;
}

h1, h2, h3, p, ul {
    margin: 0;
    padding: 0;
    font-size: inherit;
    font-weight: normal;
}

button, input, select {
    font: inherit;
    color: inherit;
    background: none;
    border: 0;
    padding: 0;
    margin: 0;
    border-radius: 0;
}

svg {
    display: block;
    flex: none;
}

.sprite {
    position: absolute;
    width: 0;
    height: 0;
}

.i16 { width: 16px; height: 16px; }
.i8 { width: 8px; height: 8px; }
.appicon { width: 14px; height: 11px; }

.btn {
    display: flex;
    align-items: center;
    justify-content: center;
    background: var(--face);
    border: 1px solid;
    border-color: var(--light) var(--dark) var(--dark) var(--light);
    box-shadow: inset -1px -1px var(--shade);
}

/* title and menu */
.titlebar {
    display: flex;
    align-items: center;
    height: 17px;
    padding: 0 2px 0 1px;
    background: linear-gradient(90deg, #808080, #c0c0c0);
    color: #d8d4cc;
}

.titlebar h1, .dlg-title h2 {
    flex: 1;
    margin-left: 1px;
    font: bold 11px/15px var(--ui);
    white-space: nowrap;
}

.winbtns {
    display: flex;
    margin-left: auto;
}

.winbtns button {
    width: 15px;
    height: 13px;
    display: flex;
    align-items: center;
    justify-content: center;
    background: var(--face);
    border: 1px solid;
    border-color: var(--light) var(--dark) var(--dark) var(--light);
}

.winbtns button:last-child {
    margin-left: 2px;
}

.winbtns svg {
    width: 12px;
    height: 10px;
}

.menubar {
    display: flex;
    align-items: center;
    gap: 10px;
    height: 18px;
    padding: 0 2px 0 4px;
    color: #808080;
}

/* toolbars */
.toolbars {
    background: var(--band);
    padding-bottom: 1px;
}

.toolrow {
    display: flex;
    height: 28px;
    padding-left: 2px;
}

.toolbar {
    display: flex;
    align-items: center;
    padding-right: 9px;
}

.toolbar::before {
    content: "";
    width: 4px;
    height: 18px;
    margin-right: 3px;
    background: repeating-linear-gradient(#333 0 1px, transparent 1px 2px);
}

.toolbar > button {
    width: 22px;
    height: 22px;
    display: flex;
    align-items: center;
    justify-content: center;
}

.toolbar.tight > button {
    width: 21px;
}

.toolbar svg {
    width: 16px;
    height: 16px;
}

.toolbar > .pressed {
    background: #d4d9e6;
    border: 1px solid #26366c;
}

.sep {
    width: 6px;
    height: 20px;
    background: linear-gradient(90deg, transparent 2px, #a8a49c 2px 3px, #fff 3px 4px, transparent 4px);
}

.combo {
    position: relative;
    display: flex;
    height: 19px;
    background: #fff;
    border: 1px solid;
    border-color: var(--shade) var(--light) var(--light) var(--shade);
    box-shadow: inset 1px 1px var(--dark);
}

.combo select {
    flex: 1;
    appearance: none;
    padding-left: 3px;
}

.combo::after {
    content: "";
    position: absolute;
    top: 1px;
    right: 0;
    bottom: 0;
    width: 15px;
    border: 1px solid;
    border-color: var(--light) var(--dark) var(--dark) var(--light);
    background: linear-gradient(to bottom left, #000 50%, transparent 50%) 3px 6px / 4px 4px no-repeat, linear-gradient(to bottom right, #000 50%, transparent 50%) 7px 6px / 4px 4px no-repeat, var(--face);
    pointer-events: none;
}

.combo-tool { width: 92px; }
.combo-sim { width: 176px; }

/* workspace */
.workspace {
    flex: 1;
    display: flex;
    gap: 5px;
    padding-bottom: 4px;
}

.sidebar {
    width: 297px;
    display: flex;
    flex-direction: column;
    border-right: 1px solid var(--light);
}

.dock {
    display: flex;
    flex-direction: column;
    align-items: flex-start;
    padding: 0 3px 0 3px;
}

.dock-project {
    flex: 1;
    padding-bottom: 12px;
}

.dock-props {
    padding-top: 2px;
    padding-bottom: 5px;
    border-top: 2px solid var(--dark);
}

.dock-head {
    align-self: stretch;
    display: flex;
    align-items: center;
    gap: 4px;
    height: 14px;
    margin-bottom: 3px;
    padding-right: 3px;
    border: 1px solid #9c988f;
}

.dock-head h2 {
    flex: 1;
    padding-left: 1px;
}

.frame {
    align-self: stretch;
    margin: 0 4px 0 5px;
    padding: 3px;
    border: 1px solid;
    border-color: var(--light) var(--shade) var(--shade) var(--light);
    border-right-width: 2px;
    border-bottom-width: 2px;
}

.dock-project .frame {
    flex: 1;
    display: flex;
}

.well {
    flex: 1;
    display: flex;
    background: #fff;
    border: 1px solid;
    border-color: var(--dark) var(--light) var(--light) var(--dark);
}

.foot-tab {
    margin-left: 6px;
    height: 17px;
    padding: 0 6px;
    border: 1px solid;
    border-color: transparent var(--dark) var(--dark) var(--light);
    box-shadow: inset -1px -1px #aaa;
}

.tree {
    flex: 1;
    padding: 1px 0 0 17px;
    list-style: none;
}

.tree li {
    display: flex;
    height: 17px;
    align-items: center;
}

.tree svg {
    width: 14px;
    height: 14px;
    margin: 0 2px;
}

.tree span {
    padding: 0 2px;
}

.selected {
    background: var(--face);
}

.tree .selected {
    font-weight: bold;
    font-size: 11px;
}

.guide, .exp, .elbow {
    width: 18px;
    height: 17px;
    flex: none;
    background: repeating-linear-gradient(#aaa 0 1px, transparent 1px 2px) 9px 0 / 1px 100% no-repeat;
}

.exp {
    display: flex;
    align-items: center;
    justify-content: center;
    background: repeating-linear-gradient(#aaa 0 1px, transparent 1px 2px) 9px 0 / 1px 100% no-repeat, repeating-linear-gradient(90deg, #aaa 0 1px, transparent 1px 2px) 10px 8px / 8px 1px no-repeat;
}

.exp::before {
    content: "";
    width: 9px;
    height: 9px;
    margin-left: 1px;
    border: 1px solid #999;
    background: linear-gradient(#000, #000) center / 5px 1px no-repeat, linear-gradient(#000, #000) center / 1px 5px no-repeat, #fff;
}

.exp.minus::before {
    background: linear-gradient(#000, #000) center / 5px 1px no-repeat, #fff;
}

.elbow {
    background: repeating-linear-gradient(#aaa 0 1px, transparent 1px 2px) 9px 0 / 1px 9px no-repeat, repeating-linear-gradient(90deg, #aaa 0 1px, transparent 1px 2px) 9px 8px / 9px 1px no-repeat;
}

.tree li:last-child .exp {
    background-size: 1px 9px, 8px 1px;
}

.vscroll {
    width: 16px;
    display: flex;
    flex-direction: column;
}

.vscroll button, .hscroll button, .thumb {
    background: var(--face);
    border: 1px solid;
    border-color: var(--light) var(--dark) var(--dark) var(--light);
}

.vscroll button, .hscroll button {
    width: 16px;
    height: 15px;
    display: flex;
    align-items: center;
    justify-content: center;
}

.vscroll button svg, .hscroll button svg {
    width: 8px;
    height: 8px;
}

.track {
    flex: 1;
    background: #ebe9e4;
}

.vscroll .thumb { flex: 0 0 53%; }
.vscroll .thumb.small { flex: 0 0 18px; }

.props-wrap {
    flex: 1;
}

.props {
    width: 100%;
    table-layout: fixed;
    border-collapse: separate;
    border-spacing: 0;
}

.props .p-name { width: 60px; }
.props .p-value { width: 166px; }

.props th {
    height: 19px;
    padding: 0;
    font-weight: normal;
    background: var(--face);
    border: 1px solid;
    border-color: var(--light) var(--dark) var(--dark) var(--light);
}

.props td {
    height: 19px;
    padding: 0 2px;
    white-space: nowrap;
    border-right: 1px solid #c0c0c0;
    border-bottom: 1px solid #c0c0c0;
}

.props td:last-child {
    border: 0;
}

.props tr:last-child td {
    height: 15px;
    border-bottom: 0;
}

/* plot */
.plot {
    flex: 1;
    display: flex;
    margin-right: 3px;
    background: #fff;
    border-left: 2px solid var(--dark);
    border-top: 1px solid var(--dark);
}

.ylabel {
    width: 67px;
    padding-left: 36px;
    display: flex;
    align-items: center;
    justify-content: center;
    writing-mode: vertical-rl;
    transform: rotate(180deg);
    font-size: 12px;
}

.plot-body {
    flex: 1;
    display: flex;
    flex-direction: column;
    margin-right: 18px;
}

.plot-head {
    display: flex;
    justify-content: flex-end;
    align-items: center;
    gap: 16px;
    height: 24px;
    margin-right: -8px;
    font-size: 13px;
}

.plot-head svg {
    width: 10px;
    height: 10px;
    margin-bottom: 5px;
}

.canvas {
    flex: 1;
    position: relative;
    border: 1px solid #333;
}

.canvas > svg {
    position: absolute;
    width: 100%;
    height: 100%;
}

.legend {
    position: absolute;
    top: -2px;
    right: -6px;
    width: 84px;
    background: #fff;
    border: 1px solid #222;
    box-shadow: 5px 5px #c0c0c0;
}

.legend h3 {
    height: 17px;
    line-height: 17px;
    text-align: center;
}

.curve {
    padding: 3px 4px 2px;
    border-top: 1px solid #bbb;
    line-height: 11px;
}

.curve p {
    display: flex;
    align-items: center;
    justify-content: space-between;
    white-space: nowrap;
}

.line { width: 23px; height: 2px; }
.red { background: #d02020; }
.plum { background: #8c4c64; }

.ticks {
    width: 100%;
    height: 6px;
}

.xaxis {
    align-self: flex-end;
    width: 296px;
    height: 26px;
    display: flex;
    justify-content: space-between;
    font-size: 12px;
}

.xaxis span {
    width: 0;
    display: flex;
    justify-content: center;
    line-height: 10px;
}

/* lower docks */
.lower {
    display: flex;
    height: 88px;
    border-top: 2px solid var(--dark);
    border-bottom: 1px solid var(--shade);
}

.messages {
    flex: 1;
    display: flex;
    padding: 3px 6px 3px 4px;
    border-right: 2px solid var(--dark);
    min-width: 0;
}

.vhead {
    width: 12px;
    display: flex;
    flex-direction: column;
    align-items: center;
    gap: 2px;
    padding: 2px 0 1px;
    border: 1px solid #9c988f;
}

.vhead h2 {
    flex: 1;
    writing-mode: vertical-rl;
    transform: rotate(180deg);
    font-size: 9px;
    line-height: 10px;
    white-space: nowrap;
}

.msgs {
    flex: 1;
    padding-left: 4px;
    list-style: none;
    background: #fff;
    border-left: 2px solid var(--dark);
    border-top: 1px solid #999;
}

.msgs li {
    display: flex;
    align-items: center;
    height: 15px;
    white-space: nowrap;
}

.msgs .exp {
    height: 15px;
    background-size: 0 0, 8px 1px;
}

.msgs svg {
    width: 15px;
    height: 15px;
    margin: 0 2px;
}

.msgs .l1 { padding-left: 18px; }
.msgs .l2 { padding-left: 36px; }
.msgs .l2 svg { margin-left: 12px; margin-right: 6px; }
.msgs span { padding: 0 1px; }

.branch {
    width: 18px;
    height: 15px;
    background: repeating-linear-gradient(#aaa 0 1px, transparent 1px 2px) 5px 0 / 1px 100% no-repeat, repeating-linear-gradient(90deg, #aaa 0 1px, transparent 1px 2px) 5px 7px / 10px 1px no-repeat;
}

.progress {
    width: 636px;
    display: flex;
    padding: 3px 4px 3px 2px;
}

.prog-body {
    flex: 1;
    margin-left: 2px;
    padding-bottom: 13px;
    background: #fff;
    border-top: 1px solid var(--dark);
    border-left: 1px solid var(--dark);
    min-width: 0;
}

.prog-main {
    height: 100%;
    padding: 5px 7px 0 10px;
    background: var(--face);
    white-space: nowrap;
}

.prog-row {
    display: flex;
    align-items: center;
    gap: 7px;
    margin-bottom: 2px;
}

.bar {
    flex: 1;
    height: 14px;
    padding: 1px;
    border: 1px solid;
    border-color: var(--shade) var(--light) var(--light) var(--shade);
}

.bar i {
    display: block;
    height: 100%;
    background: #c80000;
}

.prog-row .btn {
    width: 26px;
    height: 20px;
}

/* status */
.status {
    display: flex;
    align-items: center;
    gap: 3px;
    height: 21px;
    padding-left: 1px;
    border-top: 1px solid var(--light);
}

.ready {
    flex: 1;
}

.status label, .status input {
    width: 33px;
    height: 15px;
    padding-left: 1px;
    border: 1px solid;
    border-color: var(--shade) var(--light) var(--light) var(--shade);
}

.status input {
    width: 61px;
    padding-left: 3px;
    color: #8c8c8c;
    font: 10px/13px "DejaVu Sans", sans-serif;
    border-color: var(--light) var(--dark) var(--dark) var(--dark);
}

/* taskbar */
.taskbar {
    display: flex;
    align-items: center;
    height: 39px;
    padding: 0 2px;
    border-top: 1px solid var(--light);
}

.start {
    width: 48px;
    height: 35px;
    font: bold 11px/14px "Open Sans", sans-serif;
}

.tasks {
    flex: 1;
    display: flex;
    gap: 2px;
    padding-left: 8px;
}

.tasks button {
    width: 45px;
    height: 35px;
    display: flex;
    align-items: center;
    justify-content: center;
}

.tasks svg {
    width: 30px;
    height: 30px;
}

.tasks .active {
    background: #fff;
    border-color: var(--dark) var(--light) var(--light) var(--dark);
    box-shadow: none;
}

.lang {
    display: flex;
    align-items: center;
    gap: 2px;
    margin-right: 3px;
}

.lang span {
    font-size: 11px;
}

.langctl svg {
    width: 8px;
    height: 8px;
}

.tray {
    display: flex;
    align-items: center;
    gap: 7px;
    height: 35px;
    padding-left: 5px;
    border: 1px solid;
    border-color: var(--shade) var(--light) var(--light) var(--shade);
}

.tray svg {
    width: 16px;
    height: 16px;
}

.clock {
    display: flex;
    flex-direction: column;
    align-items: center;
    width: 56px;
    font-size: 11px;
    line-height: 15px;
}

/* solutions dialog */
.dialog {
    position: absolute;
    left: 327px;
    top: 96px;
    width: 628px;
    padding: 2px 3px 3px;
    display: flex;
    flex-direction: column;
    background: var(--face);
    border: 1px solid;
    border-color: var(--light) var(--dark) var(--dark) var(--light);
    box-shadow: inset -1px -1px var(--shade);
}

.dlg-title {
    display: flex;
    align-items: center;
    height: 16px;
    padding: 0 2px 0 1px;
    background: linear-gradient(90deg, #0a246a, #a6caf0);
    color: #fff;
}

.dlg-form {
    display: flex;
    padding: 6px 30px 0 6px;
}

.fields {
    flex: 1;
    display: grid;
    grid-template-columns: 82px 1fr;
    row-gap: 12px;
    align-items: center;
    align-content: start;
}

.variation {
    display: flex;
    gap: 7px;
}

.variation input {
    flex: 1;
    height: 19px;
    min-width: 0;
    padding: 0 3px;
    font-size: 9px;
    border: 1px solid;
    border-color: var(--shade) var(--light) var(--light) var(--shade);
    box-shadow: inset 1px 1px var(--dark);
}

.variation .btn {
    width: 18px;
    height: 20px;
}

.checkbtn {
    align-self: flex-start;
    width: 34px;
    height: 34px;
    margin: 20px 0 0 13px;
    display: flex;
    align-items: center;
    justify-content: center;
    border: 2px solid;
    border-color: var(--shade) var(--light) var(--light) var(--shade);
}

.checkbtn svg {
    width: 26px;
    height: 22px;
}

.tabs {
    display: flex;
    align-items: flex-end;
    padding: 6px 0 0 5px;
}

.tabs button {
    height: 17px;
    padding: 0 5px;
    border: 1px solid;
    border-color: var(--light) var(--dark) transparent var(--light);
}

.tabs .current {
    height: 21px;
    margin-bottom: -1px;
    padding: 0 5px 3px;
    background: var(--face);
    border-right-width: 2px;
    border-bottom: 0;
    border-right-color: var(--shade);
}

.panel {
    margin: 0 4px;
    padding: 12px 13px 18px;
    display: flex;
    flex-direction: column;
    border: 1px solid;
    border-color: var(--light) var(--shade) var(--shade) var(--light);
    border-right-width: 2px;
    border-bottom-width: 2px;
}

.grid {
    height: 266px;
    margin: 8px 0 3px;
    display: flex;
    flex-direction: column;
    border: 1px solid var(--dark);
    border-right-width: 2px;
    border-bottom-width: 2px;
}

.mesh {
    width: 100%;
    table-layout: fixed;
    border-spacing: 0;
}

.c0 { width: 108px; }
.c1 { width: 69px; }
.c2 { width: 87px; }
.c3 { width: 89px; }
.c4 { width: 93px; }
.c5 { width: 72px; }

.mesh th {
    height: 19px;
    padding: 0 1px;
    font-weight: normal;
    white-space: nowrap;
    border: 1px solid;
    border-color: var(--light) var(--shade) var(--shade) var(--light);
}

.mesh thead th {
    height: 18px;
    overflow: hidden;
    border-bottom-color: var(--dark);
}

.mesh thead th:last-child {
    text-align: right;
}

.mesh tbody th {
    text-align: left;
}

.mesh td {
    height: 19px;
    padding: 0 2px;
    white-space: nowrap;
    border-right: 1px solid #c8c4bc;
    border-bottom: 1px solid #c8c4bc;
}

.hscroll {
    display: flex;
    height: 15px;
    margin-top: auto;
}

.hscroll .thumb {
    flex: 0 0 402px;
}

.push {
    align-self: center;
    width: 74px;
    height: 22px;
}

.close {
    height: 24px;
    margin: 3px 0 5px;
}
```
